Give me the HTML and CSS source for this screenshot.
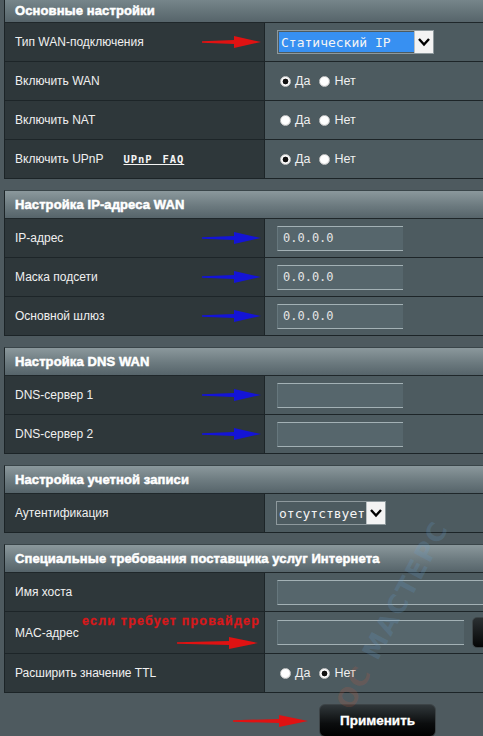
FILE: index.html
```html
<!DOCTYPE html>
<html lang="ru">
<head>
<meta charset="utf-8">
<title>WAN</title>
<link rel="stylesheet" href="styles.css">
</head>
<body>
<div class="page">

  <section class="sec">
    <div class="head head-cut">Основные настройки</div>
    <div class="row">
      <div class="lbl"><span>Тип WAN-подключения</span>
        <svg class="arrow" width="60" height="16" viewBox="0 0 60 16"><path d="M0 7.2 L32 6 L32 2 L59 8 L32 14 L32 10 L0 8.8 Z" fill="#e01212"/></svg>
      </div>
      <div class="val">
        <div class="select sel-wan"><span class="sel-text hl">Статический IP</span><span class="sel-btn"><svg width="14" height="10" viewBox="0 0 14 10"><path d="M2 2 L7 7.5 L12 2" fill="none" stroke="#000" stroke-width="2.4"/></svg></span></div>
      </div>
    </div>
    <div class="row">
      <div class="lbl"><span>Включить WAN</span></div>
      <div class="val radios"><span class="radio on"></span><span class="rl">Да</span><span class="radio"></span><span class="rl">Нет</span></div>
    </div>
    <div class="row">
      <div class="lbl"><span>Включить NAT</span></div>
      <div class="val radios"><span class="radio"></span><span class="rl">Да</span><span class="radio"></span><span class="rl">Нет</span></div>
    </div>
    <div class="row">
      <div class="lbl"><span>Включить UPnP</span><a class="faq">UPnP FAQ</a></div>
      <div class="val radios"><span class="radio on"></span><span class="rl">Да</span><span class="radio"></span><span class="rl">Нет</span></div>
    </div>
  </section>

  <section class="sec">
    <div class="head">Настройка IP-адреса WAN</div>
    <div class="row">
      <div class="lbl"><span>IP-адрес</span>
        <svg class="arrow" width="60" height="16" viewBox="0 0 60 16"><path d="M0 7.2 L32 6 L32 2 L59 8 L32 14 L32 10 L0 8.8 Z" fill="#1414d6"/></svg>
      </div>
      <div class="val"><div class="inp">0.0.0.0</div></div>
    </div>
    <div class="row">
      <div class="lbl"><span>Маска подсети</span>
        <svg class="arrow" width="60" height="16" viewBox="0 0 60 16"><path d="M0 7.2 L32 6 L32 2 L59 8 L32 14 L32 10 L0 8.8 Z" fill="#1414d6"/></svg>
      </div>
      <div class="val"><div class="inp">0.0.0.0</div></div>
    </div>
    <div class="row">
      <div class="lbl"><span>Основной шлюз</span>
        <svg class="arrow" width="60" height="16" viewBox="0 0 60 16"><path d="M0 7.2 L32 6 L32 2 L59 8 L32 14 L32 10 L0 8.8 Z" fill="#1414d6"/></svg>
      </div>
      <div class="val"><div class="inp">0.0.0.0</div></div>
    </div>
  </section>

  <section class="sec">
    <div class="head">Настройка DNS WAN</div>
    <div class="row">
      <div class="lbl"><span>DNS-сервер 1</span>
        <svg class="arrow" width="60" height="16" viewBox="0 0 60 16"><path d="M0 7.2 L32 6 L32 2 L59 8 L32 14 L32 10 L0 8.8 Z" fill="#1414d6"/></svg>
      </div>
      <div class="val"><div class="inp"></div></div>
    </div>
    <div class="row">
      <div class="lbl"><span>DNS-сервер 2</span>
        <svg class="arrow" width="60" height="16" viewBox="0 0 60 16"><path d="M0 7.2 L32 6 L32 2 L59 8 L32 14 L32 10 L0 8.8 Z" fill="#1414d6"/></svg>
      </div>
      <div class="val"><div class="inp"></div></div>
    </div>
  </section>

  <section class="sec">
    <div class="head">Настройка учетной записи</div>
    <div class="row">
      <div class="lbl"><span>Аутентификация</span></div>
      <div class="val">
        <div class="select sel-auth"><span class="sel-text">отсутствует</span><span class="sel-btn"><svg width="14" height="10" viewBox="0 0 14 10"><path d="M2 2 L7 7.5 L12 2" fill="none" stroke="#000" stroke-width="2.4"/></svg></span></div>
      </div>
    </div>
  </section>

  <section class="sec">
    <div class="head">Специальные требования поставщика услуг Интернета</div>
    <div class="row">
      <div class="lbl"><span>Имя хоста</span></div>
      <div class="val"><div class="inp inp-wide"></div></div>
    </div>
    <div class="row row-mac">
      <div class="lbl"><span>MAC-адрес</span>
        <div class="note">если требует провайдер</div>
        <svg class="arrow-mac" width="82" height="16" viewBox="0 0 82 16"><path d="M0 7.2 L52 6 L52 2 L81 8 L52 14 L52 10 L0 8.8 Z" fill="#e01212"/></svg>
      </div>
      <div class="val"><div class="inp inp-mac"></div><div class="mac-btn"></div></div>
    </div>
    <div class="row">
      <div class="lbl"><span>Расширить значение TTL</span></div>
      <div class="val radios"><span class="radio"></span><span class="rl">Да</span><span class="radio on"></span><span class="rl">Нет</span></div>
    </div>
  </section>

  <div class="apply-row">
    <svg class="arrow-apply" width="76" height="16" viewBox="0 0 76 16"><path d="M0 7.2 L46 6 L46 2 L75 8 L46 14 L46 10 L0 8.8 Z" fill="#e01212"/></svg>
    <button class="apply">Применить</button>
  </div>

  <div class="watermark"><span class="wm-red">ОС</span> МАСТЕРС</div>
</div>
</body>
</html>
```

FILE: styles.css
```css
html, body {
  margin: 0;
  padding: 0;
  background: #4e5a5f;
  overflow: hidden;
  width: 483px;
  height: 736px;
}
body {
  font-family: "Liberation Sans", Arial, sans-serif;
  color: #f2f2f2;
}
.page {
  position: relative;
  width: 483px;
  height: 736px;
  overflow: hidden;
}
.sec {
  margin-left: 4px;
  width: 520px;
  border: 1px solid #1c2427;
  border-top-color: #3a4549;
  margin-bottom: 11px;
}
.sec:first-child {
  border-top: 0;
}
.head {
  height: 27px;
  display: flex;
  align-items: center;
  padding-left: 10px;
  background: linear-gradient(#8b989c, #6c7a7f 55%, #56646a);
  border-bottom: 1px solid #1f272a;
  font-weight: bold;
  font-size: 13px;
  color: #fff;
  -webkit-text-stroke: 0.5px #fff;
  letter-spacing: 0.1px;
}
.head-cut {
  height: 21px;
  padding-bottom: 1px;
  box-sizing: content-box;
  background: linear-gradient(#76858a, #56646a);
}
.row {
  display: grid;
  grid-template-columns: 260px 1fr;
  height: 38px;
  border-bottom: 1px solid #1d2528;
}
.row:last-child {
  border-bottom: 0;
}
.row-mac {
  height: 41px;
}
.lbl {
  position: relative;
  background: #2e373a;
  border-right: 1px solid #1d2528;
  display: flex;
  align-items: center;
  padding-left: 10px;
  font-size: 12px;
  color: #f0f0f0;
}
.lbl .arrow {
  margin-left: auto;
  margin-right: 2px;
}
.faq {
  margin-left: 20px;
  font-family: "DejaVu Sans Mono", monospace;
  font-weight: bold;
  font-size: 10.5px;
  letter-spacing: 0.9px;
  word-spacing: 3px;
  text-decoration: underline;
  color: #f4f4f4;
}
.val {
  background: #4d5b60;
  display: flex;
  align-items: center;
  padding-left: 12px;
}
.select {
  display: flex;
  height: 22px;
  border: 1px solid #8e999d;
  font-family: "DejaVu Sans Mono", monospace;
  font-size: 13px;
}
.sel-wan {
  width: 155px;
}
.sel-auth {
  width: 108px;
  margin-left: -1px;
}
.sel-text {
  flex: 1;
  display: flex;
  align-items: center;
  padding-left: 2px;
  color: #f4f4f4;
}
.sel-text.hl {
  background: #3790f2;
  margin: 1px 0 1px 1px;
}
.sel-btn {
  width: 18px;
  background: #f3f3f3;
  display: flex;
  align-items: center;
  justify-content: center;
  border-left: 1px solid #b9c0c3;
}
.inp {
  box-sizing: border-box;
  width: 126px;
  height: 25px;
  background: #56666c;
  border-top: 1px solid #a3b1b5;
  border-bottom: 1px solid #a3b1b5;
  border-left: 1px solid #66777d;
  display: flex;
  align-items: center;
  padding-left: 5px;
  font-family: "DejaVu Sans Mono", monospace;
  font-size: 12px;
  color: #e4e4e4;
}
.inp-wide {
  width: 230px;
}
.inp-mac {
  width: 187px;
}
.mac-btn {
  margin-left: 8px;
  width: 60px;
  height: 29px;
  border-radius: 5px;
  background: linear-gradient(#2b3032, #050606);
  border: 1px solid #3d4548;
}
.radios {
  padding-left: 15px;
  font-size: 12.5px;
}
.radio {
  box-sizing: border-box;
  width: 11px;
  height: 11px;
  border-radius: 50%;
  background: radial-gradient(circle at 45% 40%, #ffffff 55%, #d6d6d6 100%);
  border: 1px solid #c8c8c8;
}
.radio.on {
  background: radial-gradient(circle, #111 0 2.6px, #fff 3.2px, #fff 4px, #cfcfcf 5.5px);
}
.rl {
  margin-left: 4px;
  margin-right: 9px;
  color: #f0f0f0;
}
.note {
  position: absolute;
  left: 77px;
  top: 2px;
  font-weight: bold;
  font-size: 12.5px;
  letter-spacing: 1.2px;
  color: #d8181a;
  -webkit-text-stroke: 0.3px #d8181a;
}
.arrow-mac {
  position: absolute;
  left: 172px;
  top: 23px;
}
.apply-row {
  display: flex;
  align-items: center;
  margin-top: 0;
  padding-left: 233px;
}
.arrow-apply {
  margin-right: 10px;
}
.apply {
  width: 117px;
  height: 33px;
  border-radius: 6px;
  border: 1px solid #3d4447;
  background: linear-gradient(#30373a, #0b0d0e 60%, #000);
  color: #fff;
  font-family: "Liberation Sans", Arial, sans-serif;
  font-weight: bold;
  font-size: 13.5px;
  -webkit-text-stroke: 0.3px #fff;
  padding: 0;
}
.watermark {
  position: absolute;
  left: 330px;
  top: 700px;
  transform: rotate(-62deg);
  transform-origin: left top;
  font-family: "DejaVu Sans", sans-serif;
  font-weight: bold;
  font-size: 26px;
  line-height: 30px;
  letter-spacing: 2px;
  color: rgba(100, 160, 210, 0.2);
  white-space: nowrap;
  pointer-events: none;
}
.wm-red {
  color: rgba(200, 90, 60, 0.2);
}
```
